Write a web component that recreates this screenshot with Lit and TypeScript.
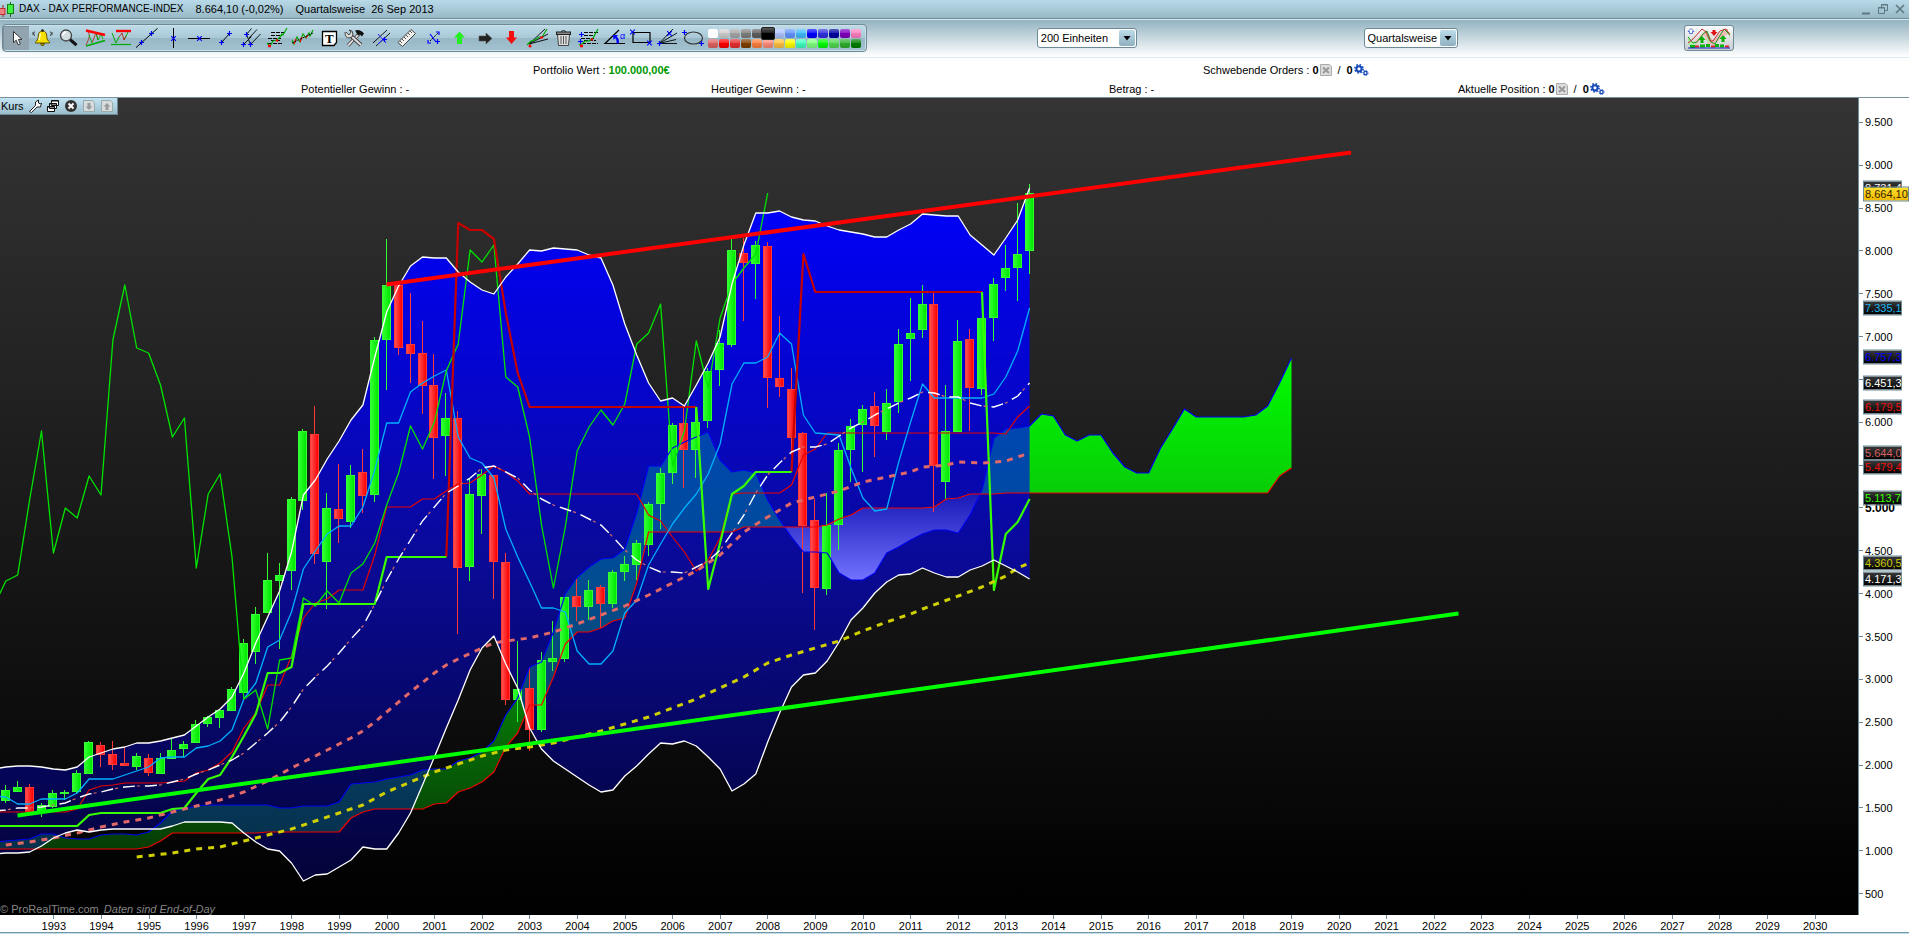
import { LitElement, html, svg, css } from "lit";
import { customElement, property, state } from "lit/decorators.js";
import { classMap } from "lit/directives/class-map.js";
import { styleMap } from "lit/directives/style-map.js";

/* ---------- chart geometry ---------- */

const PLOT = { left: 0, top: 98, width: 1858, height: 817 };
const FIRST_BAR = 53.4;
const BAR_STEP = 11.905;
const barX = (q: number) => +(FIRST_BAR + q * BAR_STEP).toFixed(1);

/* Position of a price on the value axis, as a share of the plot height. */
const priceShare = (v: number) => ((121.8 + (9500 - v) * 0.0858 - PLOT.top) / PLOT.height) * 100;

type Pair = [number, number];
const from = (start: number, ys: number[]): Pair[] => ys.map((y, i) => [start + i, y] as Pair);
const flat = (y: number, n: number): number[] => new Array(n).fill(y);
const pts = (list: Pair[]) => list.map(([q, y]) => `${barX(q)},${y}`).join(" ");

/* bodyTop, bodyBottom, high, low, rising (1) or falling (0); one row per quarter */
const CANDLE_START = -4;
const CANDLES: number[][] = [
  [790, 801, 785, 803, 1], [787, 792, 781, 792, 1], [787, 812, 784, 812, 0], [805, 812, 803, 817, 1],
  [793, 807, 790, 808, 1], [792, 794, 790, 800, 1], [773, 792, 770, 793, 1], [742, 774, 741, 774, 1],
  [745, 755, 742, 767, 0], [754, 765, 741, 770, 0], [763, 766, 747, 766, 0], [756, 767, 753, 770, 1],
  [758, 773, 754, 776, 0], [758, 774, 753, 774, 1], [750, 759, 738, 759, 1], [744, 749, 741, 757, 1],
  [724, 743, 720, 743, 1], [717, 724, 716, 727, 1], [710, 718, 710, 728, 1], [689, 711, 687, 711, 1],
  [643, 693, 639, 698, 1], [614, 652, 607, 664, 1], [580, 613, 553, 613, 1], [575, 581, 563, 649, 1],
  [499, 571, 497, 590, 1], [431, 501, 429, 510, 1], [434, 554, 406, 564, 0], [508, 562, 493, 609, 1],
  [509, 519, 464, 543, 0], [475, 522, 465, 528, 1], [472, 496, 449, 513, 0], [340, 495, 337, 502, 1],
  [285, 340, 239, 390, 1], [285, 348, 285, 355, 0], [344, 354, 293, 383, 0], [353, 386, 321, 414, 0],
  [385, 438, 354, 479, 0], [418, 436, 393, 476, 1], [418, 568, 411, 634, 0], [494, 567, 479, 581, 1],
  [474, 496, 469, 534, 1], [475, 562, 475, 599, 0], [562, 700, 553, 705, 0], [689, 700, 641, 722, 1],
  [688, 730, 668, 751, 0], [660, 730, 652, 732, 1], [658, 662, 621, 671, 1], [597, 659, 597, 662, 1],
  [596, 607, 579, 621, 0], [590, 607, 580, 620, 1], [587, 604, 585, 628, 0], [572, 604, 570, 608, 1],
  [564, 572, 556, 581, 1], [543, 565, 540, 580, 1], [504, 545, 502, 556, 1], [473, 504, 468, 529, 1],
  [425, 473, 423, 484, 1], [423, 450, 408, 488, 0], [422, 450, 407, 478, 1], [371, 421, 368, 428, 1],
  [343, 370, 330, 386, 1], [250, 345, 239, 347, 1], [253, 263, 238, 321, 0], [245, 264, 241, 299, 1],
  [246, 378, 242, 408, 0], [378, 387, 316, 397, 0], [389, 438, 368, 455, 0], [433, 526, 432, 593, 0],
  [520, 588, 499, 630, 0], [525, 589, 493, 595, 1], [450, 525, 443, 550, 1], [426, 450, 419, 482, 1],
  [409, 425, 405, 472, 1], [406, 426, 392, 457, 0], [403, 432, 389, 440, 1], [344, 402, 329, 413, 1],
  [333, 339, 298, 381, 1], [304, 330, 285, 338, 1], [304, 466, 291, 512, 0], [431, 482, 385, 499, 1],
  [341, 432, 320, 432, 1], [339, 388, 329, 431, 0], [318, 389, 318, 395, 1], [284, 318, 278, 341, 1],
  [268, 278, 245, 291, 1], [254, 268, 203, 301, 1], [193, 251, 184, 274, 1],
];

const BAND_UPPER = from(-5, [
  769, 767, 766, 766, 767, 769, 770, 767, 757, 753, 749, 747, 743, 743, 741, 738, 735, 726, 717, 709, 697,
  673, 643, 617, 591, 552, 495, 480, 459, 441, 420, 405, 357, 312, 286, 266, 257, 258, 258, 272, 282, 290,
  294, 277, 264, 250, 251, 248, 249, 250, 255, 258, 285, 324, 355, 383, 401, 398, 406, 385, 363, 337, 284,
  245, 213, 213, 211, 217, 220, 221, 226, 230, 232, 234, 237, 237, 230, 224, 214, 215, 216, 216, 235, 245,
  255, 238, 220, 188,
]);
const BAND_LOWER = from(-5, [
  854, 853, 853, 852, 846, 838, 833, 830, 832, 830, 829, 829, 829, 829, 829, 826, 822, 822, 822, 822, 823,
  833, 842, 849, 851, 863, 881, 875, 874, 867, 860, 847, 849, 849, 833, 813, 785, 757, 728, 700, 670, 648,
  636, 664, 688, 728, 749, 761, 769, 777, 785, 792, 790, 776, 766, 754, 743, 744, 741, 746, 757, 769, 791,
  784, 774, 742, 713, 687, 675, 673, 661, 642, 620, 608, 593, 582, 575, 574, 568, 573, 577, 577, 570, 566,
  560, 566, 572, 579,
]);
const BAND_MIDDLE = from(-5, [
  811, 810, 808, 808, 807, 805, 803, 798, 794, 792, 789, 787, 786, 786, 785, 782, 779, 774, 770, 765, 760,
  753, 743, 733, 722, 707, 689, 677, 666, 653, 639, 626, 604, 580, 559, 540, 521, 507, 493, 486, 478, 468,
  466, 472, 478, 490, 499, 505, 509, 513, 519, 525, 537, 550, 560, 567, 572, 572, 573, 567, 561, 550, 533,
  515, 493, 475, 463, 452, 447, 447, 444, 436, 428, 422, 415, 409, 403, 398, 392, 393, 397, 397, 403, 406,
  407, 403, 396, 383,
]);
const TENKAN = from(-5, [
  796, 797, 804, 804, 799, 799, 799, 793, 779, 779, 779, 775, 771, 767, 758, 757, 757, 748, 746, 741, 730,
  699, 683, 647, 640, 612, 569, 551, 534, 526, 526, 507, 470, 423, 423, 392, 383, 376, 370, 437, 458, 463,
  478, 529, 557, 582, 608, 608, 612, 651, 664, 664, 651, 613, 600, 565, 544, 524, 508, 494, 474, 444, 384,
  363, 363, 357, 333, 344, 415, 433, 434, 435, 468, 498, 511, 509, 462, 422, 384, 398, 398, 398, 398, 398,
  394, 377, 351, 308,
]);
const KIJUN = from(-5, [
  ...flat(812, 7), 809, 790, 786, 785, ...flat(783, 4), 782, 781, 773, 770, 763, 752, 728, 713, 685, 685,
  656, 618, 603, 599, 590, 590, 590, 555, 507, 507, 507, 499, 499, 491, 484, 483, 475, 466, 472, 481,
  ...flat(494, 10), 515, 521, 537, 552, 571, 560, 538, 494, 493, 493, 493, 493, 485, 455, 449,
  ...flat(433, 15), 434, 417, 406,
]);
const CHIKOU = from(-5, [
  606, 581, 575, 500, 431, 553, 508, 518, 476, 495, 340, 285, 348, 353, 385, 437, 418, 568, 494, 474, 557,
  699, 690, 729, 660, 658, 598, 606, 591, 603, 573, 564, 543, 505, 473, 426, 449, 422, 371, 344, 250, 262,
  245, 377, 387, 437, 525, 588, 527, 451, 427, 410, 425, 404, 344, 333, 304, 466, 431, 341, 388, 318, 284,
  268, 254, 193,
]);
const SENKOU_A = from(-5, [
  842, 841, 840, 839, 834, 834, 838, 839, 839, 835, 834, 834, 835, 832, 823, 811, 809, 806, ...flat(805, 6),
  808, 808, 806, 806, 806, 802, 784, 783, 782, 779, 777, 775, 770, 769, 769, 761, 758, 752, 741, 715, 698,
  667, 662, 632, 594, 577, 567, 559, 558, 549, 513, 466, 466, 448, 442, 437, 432, 460, 472, 470, 473, 500,
  520, 537, 552, 552, 553, 573, 580, 580, 573, 553, 547, 540, 534, 530, 530, 533, 515, 490, 438, 429, 428,
  426, 414, 416, 435, 441, 435, 435, 453, 467, 473, 473, 448, 429, 409, ...flat(417, 5), 415, 406, 383, 358,
]);
const SENKOU_B = from(-5, [
  ...flat(849, 13), 847, 841, ...flat(833, 8), ...flat(832, 7), 818, 812, ...flat(809, 5), 804, 803, 792,
  788, 782, 772, 747, 733, 705, 705, 677, 644, 632, 632, 628, 621, 618, 583, ...flat(532, 8),
  ...flat(527, 7), 525, 519, 515, ...flat(508, 6), 507, 499, 498, ...flat(494, 3), ...flat(493, 23), 476, 468,
]);
const TREND_UP: Pair[][] = [
  from(-5, [
    ...flat(826, 8), 815, ...flat(813, 6), 809, 808, 793, 779, 775, 757, 736, 714, 673, 673, 667,
    ...flat(604, 7), ...flat(557, 6),
  ]),
  from(54, [407, 589, 543, 494, 486, 472, 472, 472, 472]),
  from(78, [292, 590, 534, 522, 499]),
];
const TREND_DOWN: Pair[][] = [
  from(33, [557, 223, 230, 230, 239, 313, 373, ...flat(407, 15)]),
  from(62, [472, 254, ...flat(292, 15)]),
];
const AVERAGE_FAST: Pair[] = [
  [-4, 845], [-2, 842], [0, 838], [2, 833], [4, 827], [6, 822], [8, 818], [10, 812], [12, 806], [14, 800],
  [16, 792], [18, 781], [20, 768], [22, 756], [24, 744], [25, 738], [26, 731], [27, 722], [28, 712],
  [30, 692], [32, 673], [33, 665], [34, 659], [36, 648], [37, 643], [38, 641], [40, 638], [42, 632],
  [44, 624], [46, 615], [48, 606], [50, 595], [52, 583], [54, 571], [56, 555], [58, 532], [60, 517],
  [62, 503], [64, 497], [66, 491], [68, 482], [70, 477], [72, 472], [73, 467], [75, 465], [76, 462],
  [78, 463], [80, 461], [82, 453],
];
const AVERAGE_SLOW: Pair[] = [
  [7, 857], [10, 853], [12, 849], [14, 847], [16, 841], [18, 835], [20, 829], [22, 821], [24, 813],
  [26, 805], [28, 792], [30, 782], [32, 772], [34, 764], [36, 756], [38, 750], [40, 747], [42, 743],
  [44, 737], [46, 731], [48, 724], [50, 717], [52, 708], [54, 699], [56, 688], [58, 677], [60, 663],
  [62, 655], [64, 648], [66, 641], [68, 631], [70, 622], [72, 614], [73, 609], [76, 596], [78, 587],
  [80, 576], [81, 568], [82, 563],
];

/* The part of the cloud in which line B runs over line A. */
const WEAK_FROM = 61;
const WEAK_TO = 78;
const between = (l: Pair[], a: number, b: number) => l.filter(([q]) => q >= a && q <= b);

const TAGS: { value: number; text: string; tone: string }[] = [
  { value: 8731, text: "8.731,4", tone: "white" },
  { value: 7335, text: "7.335,1", tone: "sky" },
  { value: 6757, text: "6.757,3", tone: "blue" },
  { value: 6451, text: "6.451,3", tone: "white" },
  { value: 6179, text: "6.179,5", tone: "red" },
  { value: 5644, text: "5.644,0", tone: "salmon" },
  { value: 5479, text: "5.479,4", tone: "red" },
  { value: 5113, text: "5.113,7", tone: "green" },
  { value: 4360, text: "4.360,5", tone: "yellow" },
  { value: 4171, text: "4.171,3", tone: "white" },
  { value: 8664, text: "8.664,10", tone: "last" },
];

/* ---------- icons ---------- */

const plus = (x: number, y: number) => svg`<path d="M${x - 2.5} ${y}h5M${x} ${y - 2.5}v5" stroke="#00f" stroke-width="1.2"/>`;
const star = (x: number, y: number) =>
  svg`<path d="M${x - 2.3} ${y - 2.3}l4.6 4.6M${x + 2.3} ${y - 2.3}l-4.6 4.6" stroke="#00f" stroke-width="1.1"/>`;
const K = "#000";
const R = "#f00";
const G = "#0a0";

const TOOLS: { name: string; art: unknown }[] = [
  { name: "Zeiger", art: svg`<path d="M10.5 5.5v11.2l2.7-2.5 2 4.6 2.2-1-2-4.4h3.6z" fill="#fff" stroke="#333"/>` },
  {
    name: "Alarm",
    art: svg`<path d="M13.5 5c3.6 0 4.2 3 4.4 6.5.2 2 .8 3 2.6 4.5v1h-14v-1c1.800-1.500 2.400-2.500 2.600-4.500C9.300 8 9.900 5 13.500 5z" fill="#f7e000" stroke="#5a5000"/>
      <path d="M11.500 7.500c-.8 2-.8 4-1.200 6.500" stroke="#fffbc0" stroke-width="1.500"/>
      <path d="M11.500 17.500h4l-1 2h-2z" fill="#b8a000" stroke="#5a5000"/><circle cx="13.500" cy="4.500" r="1.200" fill="#111"/>
      <path d="M5.500 5.500q-1.500 2 0 4.500M4 6v3M21.500 5.500q1.500 2 0 4.500M23 6v3" stroke="#222" stroke-width=".8"/>`,
  },
  {
    name: "Lupe",
    art: svg`<path d="M15 13.500l6.500 5.700" stroke="#111" stroke-width="3"/><circle cx="11" cy="9.500" r="5.500" fill="#d4dde2" stroke="#444" stroke-width="1.300"/>
      <path d="M7.800 9.500q.3-3.200 3.400-3.400" stroke="#fff" stroke-width="1.500"/>`,
  },
  {
    name: "Dreieck",
    art: svg`<path d="M5 4q4 3 3.500 6T5 19M11 16.500l4-9.500 2 7" stroke="#b03020" stroke-width=".9"/><path d="M8 9l3 8M15 7l2 7 3-6 2 5" stroke="${G}" stroke-width=".9"/>
      <path d="M5 4.500l19 4.500" stroke="${R}" stroke-width="2.400"/><path d="M5 20l19-5.500" stroke="${G}" stroke-width="1.800"/>`,
  },
  {
    name: "Widerstand",
    art: svg`<path d="M5 7l4 10 3-6M17 14l4-8" stroke="${G}"/><path d="M12 11l3-4 2 7 2-4" stroke="#b03020"/>
      <path d="M9 5h15" stroke="${R}" stroke-width="2.400"/><path d="M4 18.500h20" stroke="${G}" stroke-width="1.200"/>`,
  },
  { name: "Gerade", art: svg`<path d="M3 21.600L24.600 2.300" stroke="${K}"/>${plus(8.5, 16.5)}${plus(18.5, 7.5)}` },
  { name: "Vertikale", art: svg`<path d="M14.500 2v20" stroke="${K}"/>${star(14.5, 12.5)}` },
  { name: "Horizontale", art: svg`<path d="M3 12.500h22" stroke="${K}"/>${star(14.5, 12.5)}` },
  { name: "Strecke", art: svg`<path d="M10.500 16.500l8-9" stroke="${K}"/>${plus(10.5, 16.5)}${plus(18.5, 7.5)}` },
  {
    name: "Pitchfork",
    art: svg`<path d="M6.500 18.500l8-8M9.500 8.500l4 10L23.500 8M12 12l8-8.500M9.500 8.500l5-6" stroke="${K}" stroke-width=".9"/>${plus(9.5, 8.5)}${plus(6.5, 18.5)}${plus(13.5, 18.5)}`,
  },
  {
    name: "Retracement",
    art: svg`<path d="M8 6.500h13M8 9.500h11M5 12.500h13M8 14.500h10M5 17.500h15" stroke="${K}" stroke-dasharray="4 1"/>
      <path d="M4 17l3 3 3-5 4-1 3-3 2-3 1 1 4-7" stroke="${G}" stroke-width="1.200"/><path d="M5 20h3M13 14l2 1" stroke="${R}" stroke-width="2.500"/>`,
  },
  {
    name: "Regression",
    art: svg`<path d="M3 14l2 4 3-7 3 5 3-8 3 4 3-5 1 3 3-6" stroke="${G}" stroke-width="1.200"/><path d="M5 18l2-5M11 16l2-5M17 12l2-3" stroke="${R}" stroke-width="1.200"/><path d="M3 17L24 7" stroke="${K}" stroke-dasharray="2 1"/>`,
  },
  {
    name: "Text",
    art: svg`<path d="M7.500 5.500h14v11l-2.500 3H7.500z" fill="#fff" stroke="#000" stroke-width="1.300"/><text x="14.300" y="17" text-anchor="middle" font-family="Liberation Serif, serif" font-weight="bold" font-size="13" fill="#000">T</text>`,
  },
  {
    name: "Werkzeuge",
    art: svg`<path d="M7 19.500L18 8" stroke="#555" stroke-width="3.500"/><path d="M7 19.500L18 8" stroke="#eee" stroke-width="1.600"/>
      <path d="M14 4.500q5-2 9 3l-2 3-2-2-2 1z" fill="#111"/><path d="M9 9l11 10" stroke="#444" stroke-width="4"/><path d="M9 9l11 10" stroke="#ddd" stroke-width="2"/>
      <path d="M5 6l3 3 2-3-2-2q4 0 4 4t-4 4-4-6" fill="#ddd" stroke="#444"/>`,
  },
  { name: "Kanal", art: svg`<path d="M6 17L20 4M9 20L23 7" stroke="${K}" stroke-width=".9"/><path d="M11 8l8 9M11 18l7-7" stroke="#22f"/>${plus(17.5, 13.5)}` },
  {
    name: "Lineal",
    art: svg`<path d="M5 16.500L18 3.500l4.500 4-13 13z" fill="#f0f0ec" stroke="#444"/><path d="M7 15l2 2M9 13l2 2M11 11l2 2M13 9l2 2M15 7l2 2M17 5l2 2" stroke="#444" stroke-width=".9"/>`,
  },
  { name: "Markierung", art: svg`<path d="M11 15l8-8" stroke="${K}" stroke-dasharray="2 1"/><path d="M9 14v3h3M17 6h3v3M11 8l6 8" stroke="#00f" stroke-width="1.200"/>${plus(18.5, 15.5)}` },
  { name: "Pfeil hoch", art: svg`<path d="M14.500 5.500l5.500 6h-3v6.500h-5v-6.500H9z" fill="#2e2"/>` },
  { name: "Pfeil rechts", art: svg`<path d="M21 12.500l-6-5.500v3H8v5h7v3z" fill="#222" stroke="#555" stroke-width=".6"/>` },
  { name: "Pfeil runter", art: svg`<path d="M14.500 18l5.500-6.500h-3V5h-5v6.500H9z" fill="#f01010"/>` },
  {
    name: "Gann-Linien",
    art: svg`<path d="M6 18L22 3M6 18l19-10M6 18l19-5" stroke="${K}" stroke-width=".9"/><path d="M4 19l4-4 4-1 4-3 3 0 5-8" stroke="${G}" stroke-width="1.200"/><circle cx="7" cy="20" r="1.500" fill="${R}"/><path d="M17 12l3-1" stroke="${R}" stroke-width="2"/>`,
  },
  {
    name: "Papierkorb",
    art: svg`<path d="M8.500 8.500h12l-1 11h-10z" fill="#ddd" stroke="#444"/><path d="M12 10v8M14.500 10v8M17 10v8" stroke="#555"/><rect x="7.500" y="6" width="14" height="2.500" fill="#888" stroke="#222"/><path d="M12 5.500q2.500-2 5 0" stroke="#222"/>`,
  },
  {
    name: "Fibonacci",
    art: svg`<path d="M9 6.500h14M9 9.500h11M6 12.500h13M9 14.500h12M7 17.500h16" stroke="${K}" stroke-dasharray="4 1"/><path d="M4 19l3-1 3-3 4 0 4-3 5-9" stroke="${G}" stroke-width="1.200"/><path d="M5 20h3M16 14l2-1" stroke="${R}" stroke-width="2.500"/>${plus(6.5, 8.5)}${plus(5.5, 15.5)}`,
  },
  {
    name: "Winkel",
    art: svg`<path d="M18 4L4 17.500h20" stroke="${K}" stroke-width="1.200"/><path d="M12 9h5l-1.300 1.500q3 2.500 2 7h-2q.5-3.500-1.500-5.500L12.500 14z" fill="#00f"/><text x="21.500" y="13" text-anchor="middle" font-family="Liberation Sans, sans-serif" font-size="9" fill="#00f">α</text>`,
  },
  { name: "Rechteck", art: svg`<path d="M6 6.500h17v10H6z" stroke="${K}" stroke-width="1.200"/>${star(5.5, 6)}${star(22.5, 17)}` },
  { name: "Fächer", art: svg`<path d="M6 17.500L20 3M6 17.500L24 7M6 17.500h18M6 17.500l17-4" stroke="${K}" stroke-width=".9"/>${plus(6.5, 17.5)}${star(16.5, 7.5)}` },
  { name: "Ellipse", art: svg`<ellipse cx="14.500" cy="12" rx="9" ry="6" stroke="#333" stroke-width="1.200"/>${plus(5.5, 6.5)}${plus(22.5, 17.5)}` },
];

const SWATCHES: string[] = [
  "#ffffff", "#d0d0d0", "#a8a8a8", "#808080", "#606060", "#000000", "#b0c4ff", "#6496ff", "#40bcff", "#0000ff",
  "#3030e0", "#0000a0", "#8000c0", "#ff80c0",
  "#e06464", "#ff0000", "#e83030", "#804000", "#ff8040", "#ff8c78", "#ffc040", "#ffff00", "#40ffc0", "#80ff80",
  "#00ff00", "#50d850", "#30b030", "#008000",
];

const gears = html`<svg class="gears" viewBox="0 0 15 12" aria-hidden="true">
  <g fill="none" stroke="#1448b8">
    <circle cx="5" cy="4.800" r="2.600" stroke-width="2" />
    <circle cx="5" cy="4.800" r="4.100" stroke-width="1.600" stroke-dasharray="1.600 1.620" />
    <circle cx="11.500" cy="9" r="1.600" stroke-width="1.300" />
    <circle cx="11.500" cy="9" r="2.600" stroke-width="1" stroke-dasharray="1 1.040" />
  </g>
</svg>`;
const cancelSheet = html`<svg class="sheet" viewBox="0 0 12 12" aria-hidden="true">
  <path d="M.5 .5h9l2 2v9H.5z" fill="#ddd" stroke="#aaa" />
  <path d="M3 3.500l6 5.500M9 3.500L3 9" stroke="#999" stroke-width="2" />
</svg>`;

/* ---------- chart ---------- */

@customElement("price-chart")
export class PriceChart extends LitElement {
  static styles = css`
    :host { display: block; min-width: 0; min-height: 0; }
    .plot { display: block; width: 100%; height: 100%; }
    .line { fill: none; stroke-linejoin: round; }
    .candles { shape-rendering: crispEdges; }
  `;

  private line(points: Pair[], color: string, width: number, dash = "") {
    return svg`<polyline class="line" points=${pts(points)} stroke=${color} stroke-width=${width} stroke-dasharray=${dash}/>`;
  }

  render() {
    const band = pts([...BAND_UPPER, ...[...BAND_LOWER].reverse()]);
    const cloud = pts([...SENKOU_A, ...[...SENKOU_B].reverse()]);
    const weak = pts([
      [61.4, 527], ...between(SENKOU_B, WEAK_FROM + 1, WEAK_TO - 1),
      [77.9, 494], ...between(SENKOU_A, WEAK_FROM + 1, WEAK_TO - 1).reverse(),
    ]);
    return html`<svg class="plot" viewBox="${PLOT.left} ${PLOT.top} ${PLOT.width} ${PLOT.height}" preserveAspectRatio="none" role="img" aria-label="DAX Kurs">
      <defs>
        <linearGradient id="back" x1="0" y1="98" x2="0" y2="915" gradientUnits="userSpaceOnUse">
          <stop offset="0" stop-color="#343434" /><stop offset="1" stop-color="#000" />
        </linearGradient>
        <linearGradient id="band" x1="0" y1="188" x2="0" y2="882" gradientUnits="userSpaceOnUse">
          <stop offset="0" stop-color="#0000fc" /><stop offset=".33" stop-color="#0606c4" />
          <stop offset=".55" stop-color="#0a0a94" /><stop offset="1" stop-color="#030338" />
        </linearGradient>
        <linearGradient id="cloud" x1="0" y1="358" x2="0" y2="850" gradientUnits="userSpaceOnUse">
          <stop offset="0" stop-color="#00fc00" /><stop offset=".28" stop-color="#08cc08" /><stop offset="1" stop-color="#063c06" />
        </linearGradient>
        <linearGradient id="cloudInBand" x1="0" y1="430" x2="0" y2="850" gradientUnits="userSpaceOnUse">
          <stop offset="0" stop-color="#0046b0" /><stop offset=".3" stop-color="#004c98" />
          <stop offset=".5" stop-color="#054a80" /><stop offset="1" stop-color="#06304a" />
        </linearGradient>
        <linearGradient id="weak" x1="0" y1="490" x2="0" y2="580" gradientUnits="userSpaceOnUse">
          <stop offset="0" stop-color="#1414b4" /><stop offset="1" stop-color="#7272ff" />
        </linearGradient>
        <linearGradient id="rise"><stop offset="0" stop-color="#30ff30" /><stop offset="1" stop-color="#00e800" /></linearGradient>
        <linearGradient id="fall"><stop offset="0" stop-color="#ff5050" /><stop offset="1" stop-color="#ff0000" /></linearGradient>
        <clipPath id="inBand"><polygon points=${band} /></clipPath>
      </defs>
      <rect x="0" y="98" width="1858" height="817" fill="url(#back)" />
      <polygon points=${band} fill="url(#band)" />
      <polygon points=${cloud} fill="url(#cloud)" />
      <polygon points=${cloud} fill="url(#cloudInBand)" clip-path="url(#inBand)" />
      <polygon points=${weak} fill="url(#weak)" />
      <g class="candles">
        ${CANDLES.map(([top, bottom, high, low, up], i) => {
          const x = Math.round(barX(CANDLE_START + i));
          const edge = up ? "#33ff33" : "#ff3838";
          return svg`<rect x=${x - 1} y=${high} width="1" height=${low - high} fill=${edge}/>
            <rect x=${x - 5} y=${top} width="9" height=${bottom - top} fill=${edge}/>
            <rect x=${x - 4} y=${top + 1} width="7" height=${Math.max(bottom - top - 2, 0)} fill=${up ? "url(#rise)" : "url(#fall)"}/>`;
        })}
      </g>
      ${this.line(SENKOU_A, "#0000f0", 1.2)} ${this.line(SENKOU_B, "#f00000", 1.2)}
      ${this.line(KIJUN, "#e80000", 1.2)} ${this.line(TENKAN, "#00b0ff", 1.3)}
      ${this.line(CHIKOU, "#00e400", 1.3)}
      ${TREND_DOWN.map((l) => this.line(l, "#c40000", 2.2))} ${TREND_UP.map((l) => this.line(l, "#38ff00", 2.2))}
      ${this.line(BAND_MIDDLE, "#d86868", 1.2, "0 14 3 5")} ${this.line(BAND_MIDDLE, "#fff", 1.4, "12 10")}
      ${this.line(AVERAGE_FAST, "#e06868", 3, "6 6")} ${this.line(AVERAGE_SLOW, "#d0d000", 3, "6 6")}
      ${this.line(BAND_UPPER, "#fff", 1.3)} ${this.line(BAND_LOWER, "#fff", 1.3)}
      <path d="M386.500 284.500L1351 152.500" stroke="#ff0000" stroke-width="4" />
      <path d="M17.500 815.500L1458.500 613.500" stroke="#00ff00" stroke-width="4" />
    </svg>`;
  }
}

/* ---------- value axis ---------- */

@customElement("value-axis")
export class ValueAxis extends LitElement {
  static styles = css`
    :host { display: block; position: relative; min-height: 0; border-left: 1px solid #6f8b98; background: #fff; color: #000; font: 11px/14px "Liberation Sans", Arial, sans-serif; }
    .scale { display: grid; grid-auto-rows: minmax(0, 1fr); height: 100%; box-sizing: border-box; padding-top: 3px; }
    .step { display: flex; align-items: center; gap: 2px; }
    .step::before { content: ""; width: 4px; height: 1px; background: #6f8b98; }
    .strong { font-weight: bold; font-size: 12px; }
    .tag { position: absolute; left: 4px; box-sizing: border-box; width: 39px; height: 15px; padding-left: 1px; overflow: hidden; border: 1px solid #6f8b98; background: linear-gradient(#3a3a3a, #000); line-height: 13px; transform: translateY(-50%); white-space: nowrap; }
    .white { color: #fff; }
    .sky { color: #19b4f0; }
    .blue { color: #0000ff; }
    .red { color: #f01010; }
    .salmon { color: #d86060; }
    .green { color: #38ff00; }
    .yellow { color: #c8c800; }
    .last { width: 46px; color: #302000; background: linear-gradient(#ffe030, #f0b800); }
  `;

  render() {
    const covered = [6500, 5500];
    const steps = Array.from({ length: 19 }, (_, i) => 9500 - i * 500);
    return html`<div class="scale">
        ${steps.map((v) => html`<div class=${classMap({ step: true, strong: v === 5000 })}>${covered.includes(v) ? "" : v.toLocaleString("de-DE")}</div>`)}
      </div>
      ${TAGS.map((t) => html`<div class="tag ${t.tone}" style=${styleMap({ top: `${priceShare(t.value)}%` })}>${t.text}</div>`)}`;
  }
}

/* ---------- page ---------- */

@customElement("app-root")
export class AppRoot extends LitElement {
  @property() symbol = "DAX - DAX PERFORMANCE-INDEX";
  @state() private tool = 0;
  @state() private color = 5;

  static styles = css`
    :host { display: grid; grid-template-rows: auto auto auto minmax(0, 1fr) auto; height: 100vh; min-height: 480px; overflow: hidden; background: #fff; color: #000; font: 11px/14px "Liberation Sans", Arial, sans-serif; }
    button { padding: 0; border: 0; background: none; font: inherit; color: inherit; }
    svg { display: block; fill: none; }

    .title { display: flex; align-items: center; height: 18px; border-bottom: 1px solid #6d8a96; background: linear-gradient(#b8dae8, #98b8c6); white-space: pre; }
    .title h1 { margin: 0 12px 0 4px; font: inherit; font-size: 10px; }
    .logo { width: 15px; height: 18px; }
    .change { margin-right: 12px; }
    .date { margin-left: 6px; }
    .controls { display: flex; gap: 5px; margin-left: auto; padding-right: 3px; }
    .controls svg { width: 12px; height: 12px; stroke: #5f7884; }

    .tools { display: grid; grid-template-columns: auto minmax(4px, 170fr) auto minmax(4px, 227fr) auto minmax(4px, 227fr) auto minmax(4px, 175fr); align-items: center; height: 36px; padding-bottom: 1px; border-top: 1px solid #d6e8f0; border-bottom: 1px solid #d9eaf2; background: linear-gradient(#93b3c1, #fff); }
    .bar { display: flex; align-items: center; box-sizing: border-box; height: 28px; margin-left: 2px; padding-right: 5px; border: 1px solid #6d8a96; border-radius: 4px; background: linear-gradient(#bfdbe8, #a9c8d6 50%, #97b7c6 50%, #a3c3d1); box-shadow: inset 0 0 0 1px #c8e0ea; }
    .tool { width: 26px; height: 24px; }
    .tool svg { width: 26px; height: 24px; }
    .active { background: #91a4b0; box-shadow: inset 1px 1px 0 #7b909c; }
    .palette { display: grid; grid-template-columns: repeat(14, 10px); gap: 1px; margin-left: 3px; }
    .swatch { height: 9px; border-radius: 2px; background-image: linear-gradient(rgba(255, 255, 255, .35), rgba(255, 255, 255, .1) 50%, rgba(0, 0, 0, .05) 50%, rgba(0, 0, 0, .15)); }
    .plain { background-image: none; }
    .picked { position: relative; z-index: 1; margin: -2px; height: 13px; border: 1px solid #222; }
    .pick { position: relative; display: block; }
    .pick select { appearance: none; display: block; box-sizing: border-box; height: 20px; padding: 0 0 0 3px; border: 1px solid #6d8a96; border-radius: 3px; background: #fff; color: #000; font: inherit; }
    .pick .units { width: 100px; }
    .pick .period { width: 94px; }
    .pick svg { position: absolute; top: 2px; right: 2px; width: 16px; height: 16px; border-radius: 2px; background: linear-gradient(#bcdcea, #8fb0bf); pointer-events: none; }
    .c3 { grid-column: 3; }
    .c5 { grid-column: 5; }
    .c7 { grid-column: 7; }
    .system { box-sizing: border-box; width: 50px; height: 26px; border: 1px solid #6d8a96; border-radius: 3px; background: linear-gradient(#fafafa, #c8ccd0); }
    .system svg { width: 46px; height: 22px; margin: 0 auto; }

    .info { display: grid; align-content: end; gap: 4px; height: 38px; padding-bottom: 1px; border-bottom: 1px solid #7a929e; background: #fff; white-space: nowrap; }
    .upper, .lower { display: grid; height: 15px; align-items: center; }
    .upper { grid-template-columns: minmax(0, 533fr) minmax(0, 670fr) minmax(0, 706fr); }
    .lower { grid-template-columns: minmax(0, 301fr) minmax(0, 410fr) minmax(0, 398fr) minmax(0, 349fr) minmax(0, 451fr); }
    .c2 { grid-column: 2; }
    .item { display: flex; align-items: center; gap: 0 3px; }
    .gain { color: #009a00; }
    .count { display: flex; align-items: center; gap: 1px; font-weight: bold; }
    .slash { margin: 0 3px; }
    .sheet { width: 12px; height: 12px; }
    .gears { width: 15px; height: 12px; }

    .stage { display: grid; grid-template-columns: minmax(0, 1fr) 51px; grid-template-rows: minmax(0, 1fr); }
    .canvas { position: relative; display: grid; grid-template-rows: minmax(0, 1fr); min-height: 0; }
    .panel { position: absolute; top: 0; left: 0; display: flex; align-items: center; gap: 4px; height: 17px; padding: 0 3px 0 1px; border-right: 1px solid #6d8a96; border-bottom: 1px solid #6d8a96; box-sizing: border-box; background: linear-gradient(#c4e6f4, #9cbccb); }
    .panel span { width: 23px; }
    .panel button, .panel svg { width: 14px; height: 14px; }
    .credit { position: absolute; bottom: -1px; left: 0; color: #858585; }
    .credit em { margin-left: 2px; }

    .years { display: grid; grid-auto-flow: column; grid-auto-columns: minmax(0, 1fr); height: 17px; margin-right: 51px; padding: 0 19px 0 30px; text-align: center; }
    .year { display: flex; flex-direction: column; align-items: center; line-height: 14px; }
    .year::before { content: ""; width: 1px; height: 4px; background: #6f8b98; }
    .foot { border-bottom: 1px solid #c4dce8; }
    .foot::after { content: ""; display: block; height: 1px; background: #6f9aae; }
  `;

  render() {
    const years = Array.from({ length: 38 }, (_, i) => 1993 + i);
    return html`
      <header class="title">
        <svg class="logo" viewBox="0 0 15 18" aria-hidden="true">
          <path d="M3 5v12" stroke="#a02020" /><rect x="-1" y="8.500" width="6" height="6" fill="#f08080" stroke="#c03030" />
          <path d="M10.500 2v15" stroke="#107010" /><rect x="7.500" y="4.500" width="6" height="9" fill="#40f040" stroke="#108010" />
        </svg>
        <h1>${this.symbol}</h1>
        <span class="change">8.664,10 (-0,02%)</span><span>Quartalsweise</span><span class="date">26 Sep 2013</span>
        <div class="controls">
          <button aria-label="Minimieren"><svg viewBox="0 0 12 12"><path d="M2 10.500h8" stroke-width="2" /></svg></button>
          <button aria-label="Wiederherstellen"><svg viewBox="0 0 12 12"><path d="M4.500 4V1.500h6v6H8M1.500 4.500h6v6h-6zM4 2h7M1 5h7" /></svg></button>
          <button aria-label="Schließen"><svg viewBox="0 0 12 12"><path d="M2 2l8 8M10 2l-8 8" stroke-width="1.600" /></svg></button>
        </div>
      </header>

      <div class="tools">
        <div class="bar">
          ${TOOLS.map((t, i) => html`<button class=${classMap({ tool: true, active: i === this.tool })} aria-label=${t.name} @click=${() => (this.tool = i)}><svg viewBox="0 0 26 24">${t.art}</svg></button>`)}
          <div class="palette">
            ${SWATCHES.map((c, i) => html`<button class=${classMap({ swatch: true, plain: i === 0, picked: i === this.color })} style=${styleMap({ backgroundColor: c })} aria-label=${`Farbe ${c}`} @click=${() => (this.color = i)}></button>`)}
          </div>
        </div>
        <label class="pick c3"><select class="units" aria-label="Einheiten"><option>200 Einheiten</option></select><svg viewBox="0 0 16 16"><path d="M4.500 6h7L8 10.500z" fill="#000" /></svg></label>
        <label class="pick c5"><select class="period" aria-label="Zeiteinheit"><option>Quartalsweise</option></select><svg viewBox="0 0 16 16"><path d="M4.500 6h7L8 10.500z" fill="#000" /></svg></label>
        <button class="system c7" aria-label="Handelssystem">
          <svg viewBox="0 0 46 22">
            <path d="M2 9l5 7L20 3l7 11 8-9 7-3v5l-8 5-6 6-6-1-4-9-8 10-8-4z" fill="#f0b8b8" /><path d="M2 9l5 7 5-2-3 4H2zM20 4l5 12-4-1zM36 5h8v6l-4-6z" fill="#b0e8a8" />
            <path d="M2 10l5 6 4-1 6-8 4-3 4 11 4 2 4-7 5-8 6 6" stroke="#18a018" /><path d="M2 16l5-4 9-10 4 3 4 9h3l7-10 6-2 4 6" stroke="#c03030" />
            <path d="M5 1.500l3 3h-1.500v2h-3v-2H2z" fill="#fff" stroke="#2858c8" stroke-width=".8" /><path d="M28 9l-3.500-4h2V3h3v2h2z" fill="#e01010" />
            <path d="M16 9l3.500 4h-2v3h-3v-3h-2zM37 8l3.500 4h-2v3h-3v-3h-2z" fill="#08b008" />
            <path d="M4 19.500h5M14 19h5M20 18.500h4M29 18.500h4M34 19h4" stroke="#08b008" stroke-width="3" /><path d="M9 19.500h4M25 19.500h4M39 19.500h4" stroke="#e02020" stroke-width="2" /><path d="M2 21h42" stroke="#1020c0" />
          </svg>
        </button>
      </div>

      <section class="info">
        <div class="upper">
          <div class="item c2">Portfolio Wert : <b class="gain">100.000,00€</b></div>
          <div class="item">Schwebende Orders : <span class="count">0${cancelSheet}</span><span class="slash">/</span><span class="count">0${gears}</span></div>
        </div>
        <div class="lower">
          <div class="item c2">Potentieller Gewinn : -</div>
          <div class="item">Heutiger Gewinn : -</div>
          <div class="item">Betrag : -</div>
          <div class="item">Aktuelle Position : <span class="count">0${cancelSheet}</span><span class="slash">/</span><span class="count">0${gears}</span></div>
        </div>
      </section>

      <main class="stage">
        <div class="canvas">
          <price-chart></price-chart>
          <div class="panel">
            <span>Kurs</span>
            <button aria-label="Einstellungen"><svg viewBox="0 0 14 14"><path d="M1.500 12.500l6-6V3l3-2v3l2 1 1-1-1 4H9l-5.500 5.500z" fill="#fff" stroke="#222" /></svg></button>
            <button aria-label="Fenster"><svg viewBox="0 0 14 14"><path d="M5.500 1.500h7v5h-7zM3.500 4.500h7v5h-7zM1.500 7.500h7v5h-7z" fill="#fff" stroke="#111" /><path d="M5 2h8M3 5h8M1 8h8" stroke="#111" stroke-width="1.200" /></svg></button>
            <button aria-label="Entfernen"><svg viewBox="0 0 14 14"><circle cx="7" cy="7" r="6" fill="#333" /><path d="M4.500 4.500l5 5M9.500 4.500l-5 5" stroke="#fff" stroke-width="2" /></svg></button>
            <button aria-label="Nach unten"><svg viewBox="0 0 14 14"><path d="M1.500 1.500h9l2 2v9h-11z" fill="#d8dcde" stroke="#9aa" /><path d="M7 11L3.500 7.500h2V4h3v3.500h2z" fill="#9a9a9a" /></svg></button>
            <button aria-label="Nach oben"><svg viewBox="0 0 14 14"><path d="M1.500 1.500h9l2 2v9h-11z" fill="#d8dcde" stroke="#9aa" /><path d="M7 4l3.500 3.500h-2V11h-3V7.500h-2z" fill="#9a9a9a" /></svg></button>
          </div>
          <div class="credit">© ProRealTime.com <em>Daten sind End-of-Day</em></div>
        </div>
        <value-axis></value-axis>
      </main>

      <footer class="foot">
        <div class="years">${years.map((y) => html`<div class="year">${y}</div>`)}</div>
      </footer>
    `;
  }
}
